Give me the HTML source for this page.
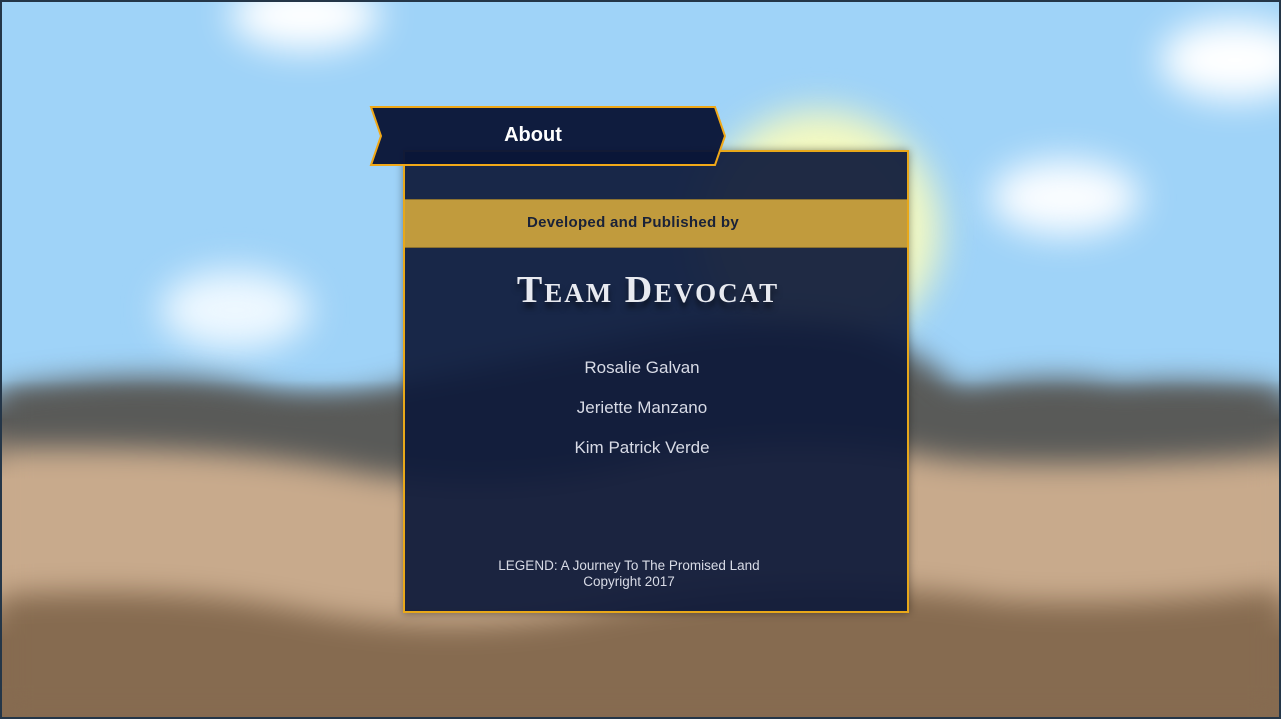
<!DOCTYPE html>
<html><head><style>
html,body{margin:0;padding:0;overflow:hidden}
body{width:1281px;height:719px;overflow:hidden;position:relative;font-family:"Liberation Sans",sans-serif;background:linear-gradient(#9fd3f8 0,#9fd3f8 380px,#595a58 420px,#c8aa8c 480px,#c8aa8c 590px,#866b50 640px)}
.bg{position:absolute;left:0;top:0;width:1281px;height:719px;overflow:hidden}
.b{position:absolute;filter:blur(18px)}
</style></head><body>
<div class="bg">
<div class="b" style="left:230px;top:-20px;width:150px;height:70px;background:#fff;border-radius:50%"></div>
<div class="b" style="left:1160px;top:20px;width:150px;height:80px;background:#fff;border-radius:50%"></div>
<div class="b" style="left:990px;top:160px;width:150px;height:75px;background:#fbfdff;border-radius:50%"></div>
<div class="b" style="left:160px;top:270px;width:150px;height:80px;background:#eef8ff;border-radius:50%"></div>
<div class="b" style="left:700px;top:110px;width:240px;height:240px;background:#f4f9c0;border-radius:50%"></div>
<svg style="position:absolute;left:0;top:0;filter:blur(14px)" width="1281" height="719">
<path d="M-60 400 Q150 360 260 390 Q330 410 420 380 Q520 360 620 340 Q760 310 860 330 Q920 350 960 390 Q1050 370 1120 385 Q1200 375 1340 395 L1340 760 L-60 760Z" fill="#595a58"/>
<path d="M-60 450 Q200 440 350 470 Q500 500 650 460 Q800 430 950 460 Q1100 470 1340 450 L1340 760 L-60 760Z" fill="#c8aa8c"/>
<path d="M-60 600 Q150 580 300 610 Q450 640 600 610 Q800 570 1000 600 Q1150 610 1340 580 L1340 760 L-60 760Z" fill="#866b50"/>
</svg>
<div style="position:absolute;left:0;top:0;width:1277px;height:715px;border:2px solid #243648"></div>
</div>
<div style="position:absolute;left:403px;top:150px;width:502px;height:459px;border:2px solid #e8a81a;background:rgba(14,26,58,0.93);box-shadow:0 0 8px rgba(0,0,0,.4)">
<div style="position:absolute;left:0;right:0;top:47px;height:47px;background:#c19b3d;border-top:1px solid #8a7030;border-bottom:1px solid #8a7030"></div>
<div style="position:absolute;left:0;right:46px;top:47px;height:47px;text-align:center;line-height:47px;font-size:15px;font-weight:bold;color:#1a2238;letter-spacing:.3px">Developed and Published by</div>
<div style="position:absolute;left:0;right:16px;top:116px;text-align:center;font-family:'Liberation Serif',serif;font-weight:bold;font-size:38px;font-variant:small-caps;letter-spacing:2px;color:#e8eaf0;text-shadow:0 6px 6px rgba(0,0,0,.5)">Team Devocat</div>
<div style="position:absolute;left:0;right:28px;top:196px;text-align:center;color:#d8dbe6;font-size:17px;line-height:40px">Rosalie Galvan<br>Jeriette Manzano<br>Kim Patrick Verde</div>
<div style="position:absolute;left:0;right:54px;top:406px;text-align:center;color:#d8dbe6;font-size:13.5px;line-height:16px">LEGEND: A Journey To The Promised Land<br>Copyright 2017</div>
</div>
<svg style="position:absolute;left:368px;top:105px" width="362" height="64">
<path d="M3 2 L347 2 L357 31 L347 60 L3 60 L13 31 Z" fill="rgba(10,22,56,0.97)" stroke="#f0a818" stroke-width="2"/>
<text x="165" y="36" text-anchor="middle" font-family="Liberation Sans" font-weight="bold" font-size="20" fill="#fff">About</text>
</svg>
</body></html>
